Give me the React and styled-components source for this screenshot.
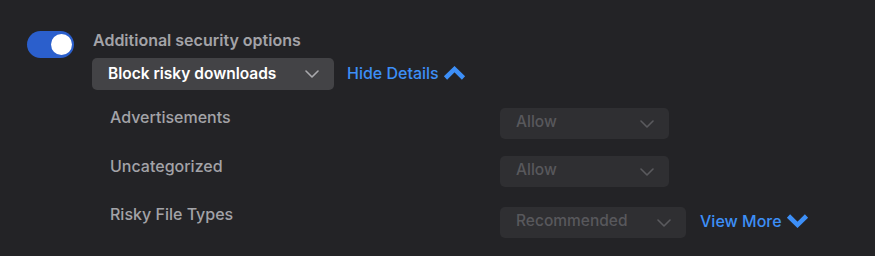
import React from "react";
import styled, { createGlobalStyle } from "styled-components";

const Global = createGlobalStyle`
  html, body { margin: 0; padding: 0; background: #232326; }
  body { font-family: Inter, "Noto Sans", sans-serif; }
`;

const Page = styled.div`
  width: 875px;
  height: 256px;
  background: #232326;
  box-sizing: border-box;
  padding: 31px 0 0 27px;
  display: flex;
  gap: 19px;
  overflow: hidden;
`;

const Toggle = styled.div`
  width: 47px;
  height: 27px;
  border-radius: 14px;
  background: #2b5fcc;
  display: flex;
  align-items: center;
  justify-content: flex-end;
  padding: 0 2px;
  box-sizing: border-box;
  flex-shrink: 0;
`;

const Knob = styled.div`
  width: 21px;
  height: 21px;
  border-radius: 50%;
  background: #ffffff;
`;

const Content = styled.div`
  display: flex;
  flex-direction: column;
`;

const Title = styled.div`
  font-size: 16px;
  line-height: 20px;
  font-weight: 600;
  color: #a3a3a8;
  margin-top: -1px;
`;

const Controls = styled.div`
  display: flex;
  align-items: center;
  gap: 13px;
  margin-top: 8px;
  margin-left: -1px;
`;

const Select = styled.div`
  display: flex;
  align-items: center;
  justify-content: space-between;
  box-sizing: border-box;
  width: ${(p) => p.$w}px;
  height: ${(p) => p.$h}px;
  padding: 0 15px 0 16px;
  border-radius: 5px;
  background: ${(p) => (p.$disabled ? "#2f2f32" : "#434346")};
  color: ${(p) => (p.$disabled ? "#58585c" : "#ffffff")};
  font-size: 15.5px;
  font-weight: ${(p) => (p.$disabled ? 500 : 600)};
  line-height: 20px;
  flex-shrink: 0;
`;

const SelectText = styled.span`
  margin-top: ${(p) => (p.$disabled ? -3 : 0)}px;
`;

const Chevron = ({ color }) => (
  <svg width="14" height="8" viewBox="0 0 14 8" fill="none">
    <path d="M1 1l6 6 6-6" stroke={color} strokeWidth="1.6" strokeLinecap="round" strokeLinejoin="round" />
  </svg>
);

const BoldChevron = ({ up }) => (
  <svg width="23" height="14" viewBox="0 0 23 14" fill="none">
    <path
      d={up ? "M2.5 12L11.5 3.2L20.5 12" : "M2.5 2L11.5 10.8L20.5 2"}
      stroke="#3d8ff7"
      strokeWidth="4.6"
      strokeLinejoin="miter"
      strokeMiterlimit="4"
    />
  </svg>
);

const LinkButton = styled.span`
  display: inline-flex;
  align-items: center;
  gap: 4px;
  color: #3d8ff7;
  font-size: 16px;
  font-weight: 500;
  line-height: 20px;
  margin-top: ${(p) => p.$mt || 0}px;
  svg { display: block; }
`;

const Details = styled.div`
  display: flex;
  flex-direction: column;
  margin-left: 17px;
  margin-top: 17px;
`;

const Row = styled.div`
  display: flex;
  align-items: flex-start;
  height: ${(p) => p.$h}px;
`;

const Label = styled.div`
  width: 390px;
  font-size: 16px;
  line-height: 20px;
  font-weight: 500;
  color: #a3a3a8;
`;

const RowControls = styled.div`
  display: flex;
  align-items: center;
  gap: 14px;
  margin-top: ${(p) => p.$mt}px;
`;

const rows = [
  { label: "Advertisements", value: "Allow", w: 169, h: 49, mt: 1 },
  { label: "Uncategorized", value: "Allow", w: 169, h: 48, mt: 0 },
  { label: "Risky File Types", value: "Recommended", w: 186, h: 40, mt: 3, more: true },
];

export default function App() {
  return (
    <>
      <Global />
      <Page>
        <Toggle>
          <Knob />
        </Toggle>
        <Content>
          <Title>Additional security options</Title>
          <Controls>
            <Select $w={242} $h={32}>
              <SelectText>Block risky downloads</SelectText>
              <Chevron color="#a9a9ad" />
            </Select>
            <LinkButton $mt={-2}>
              Hide Details
              <BoldChevron up />
            </LinkButton>
          </Controls>
          <Details>
            {rows.map((r) => (
              <Row key={r.label} $h={r.h}>
                <Label>{r.label}</Label>
                <RowControls $mt={r.mt}>
                  <Select $w={r.w} $h={31} $disabled>
                    <SelectText $disabled>{r.value}</SelectText>
                    <Chevron color="#5a5a5e" />
                  </Select>
                  {r.more && (
                    <LinkButton $mt={-4}>
                      View More
                      <BoldChevron />
                    </LinkButton>
                  )}
                </RowControls>
              </Row>
            ))}
          </Details>
        </Content>
      </Page>
    </>
  );
}
